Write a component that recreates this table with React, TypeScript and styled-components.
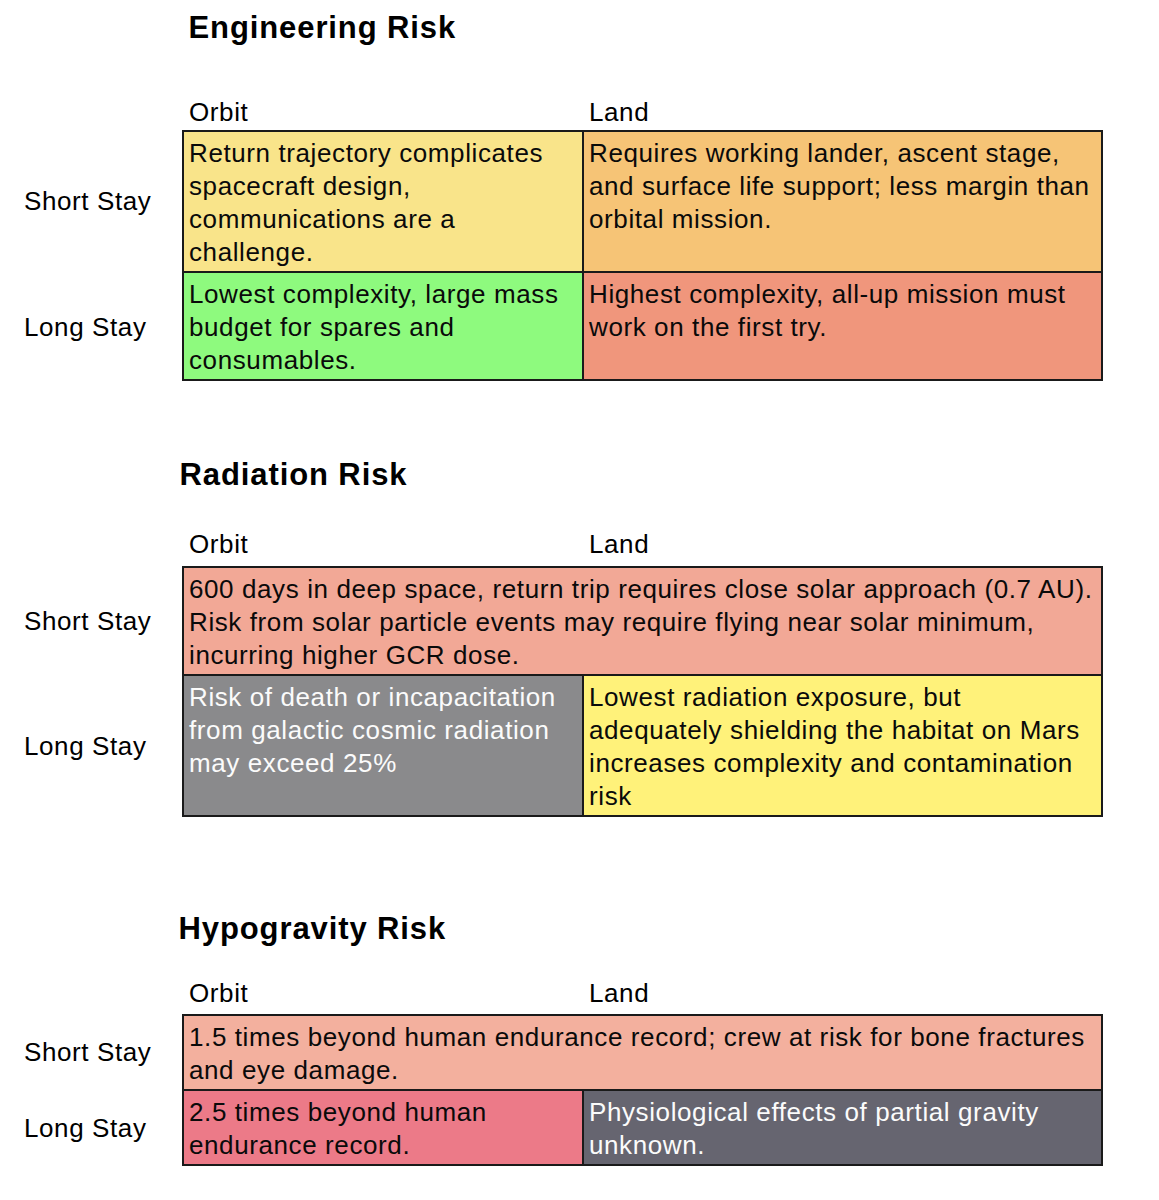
import React from "react";
import styled, { createGlobalStyle } from "styled-components";

const GlobalStyle = createGlobalStyle`
  html, body {
    margin: 0;
    padding: 0;
    background: #ffffff;
  }
  body {
    font-family: "Liberation Sans", Arial, Helvetica, sans-serif;
    color: #000;
  }
`;

const Page = styled.main`
  width: 1159px;
  padding-top: 10px;
  box-sizing: border-box;
`;

const Section = styled.section<{ $top: number }>`
  margin-top: ${(p) => p.$top}px;
  display: flex;
  flex-direction: column;
`;

const Title = styled.h2<{ $x: number; $gap: number }>`
  margin: 0 0 ${(p) => p.$gap}px ${(p) => 182 + p.$x}px;
  font-size: 31px;
  line-height: 36px;
  font-weight: 700;
  letter-spacing: 0.9px;
`;

const Grid = styled.div`
  display: grid;
  grid-template-columns: 182px 402px 519px;
`;

const HeadRow = styled(Grid)<{ $gap: number }>`
  margin-bottom: ${(p) => p.$gap}px;
`;

const BodyText = `
  font-size: 26px;
  line-height: 33px;
  letter-spacing: 0.6px;
`;

const HeadLabel = styled.div<{ $pad: number }>`
  padding-left: ${(p) => p.$pad}px;
  ${BodyText}
`;

const RowLabel = styled.div`
  align-self: center;
  padding-left: 24px;
  white-space: nowrap;
  ${BodyText}
`;

const Cell = styled.div<{
  $bg: string;
  $light?: boolean;
  $span?: boolean;
  $firstRow: boolean;
  $firstCol: boolean;
}>`
  grid-column: ${(p) => (p.$span ? "span 2" : "auto")};
  background: ${(p) => p.$bg};
  color: ${(p) => (p.$light ? "#fbfbfb" : "#0a0a0a")};
  border-style: solid;
  border-color: #1a1a1a;
  border-width: ${(p) => (p.$firstRow ? 2 : 0)}px 2px 2px
    ${(p) => (p.$firstCol ? 2 : 0)}px;
  padding: 5px 0 2px ${(p) => (p.$firstCol ? 5 : 5)}px;
  min-width: 0;
  ${BodyText}
`;

const Line = styled.span`
  display: block;
  white-space: nowrap;
`;

type CellData = { bg: string; lines: string[]; light?: boolean; span?: boolean };
type RowData = { label: string; cells: CellData[] };
type SectionData = {
  title: string;
  titleX: number;
  top: number;
  titleGap: number;
  headGap: number;
  rows: RowData[];
};

const sections: SectionData[] = [
  {
    title: "Engineering Risk",
    titleX: 6.5,
    top: 0,
    titleGap: 49.5,
    headGap: 1.5,
    rows: [
      {
        label: "Short Stay",
        cells: [
          {
            bg: "#f9e48a",
            lines: [
              "Return trajectory complicates",
              "spacecraft design,",
              "communications are a",
              "challenge.",
            ],
          },
          {
            bg: "#f6c476",
            lines: [
              "Requires working lander, ascent stage,",
              "and surface life support; less margin than",
              "orbital mission.",
            ],
          },
        ],
      },
      {
        label: "Long Stay",
        cells: [
          {
            bg: "#8efa7e",
            lines: [
              "Lowest complexity, large mass",
              "budget for spares and",
              "consumables.",
            ],
          },
          {
            bg: "#f0967c",
            lines: ["Highest complexity, all-up mission must", "work on the first try."],
          },
        ],
      },
    ],
  },
  {
    title: "Radiation Risk",
    titleX: -2.5,
    top: 76,
    titleGap: 35,
    headGap: 5,
    rows: [
      {
        label: "Short Stay",
        cells: [
          {
            bg: "#f2a896",
            span: true,
            lines: [
              "600 days in deep space, return trip requires close solar approach (0.7 AU).",
              "Risk from solar particle events may require flying near solar minimum,",
              "incurring higher GCR dose.",
            ],
          },
        ],
      },
      {
        label: "Long Stay",
        cells: [
          {
            bg: "#8a8a8c",
            light: true,
            lines: [
              "Risk of death or incapacitation",
              "from galactic cosmic radiation",
              "may exceed 25%",
            ],
          },
          {
            bg: "#fff27a",
            lines: [
              "Lowest radiation exposure, but",
              "adequately shielding the habitat on Mars",
              "increases complexity and contamination",
              "risk",
            ],
          },
        ],
      },
    ],
  },
  {
    title: "Hypogravity Risk",
    titleX: -3.5,
    top: 94,
    titleGap: 30,
    headGap: 4,
    rows: [
      {
        label: "Short Stay",
        cells: [
          {
            bg: "#f3b09e",
            span: true,
            lines: [
              "1.5 times beyond human endurance record; crew at risk for bone fractures",
              "and eye damage.",
            ],
          },
        ],
      },
      {
        label: "Long Stay",
        cells: [
          {
            bg: "#ec7a88",
            lines: ["2.5 times beyond human", "endurance record."],
          },
          {
            bg: "#666570",
            light: true,
            lines: ["Physiological effects of partial gravity", "unknown."],
          },
        ],
      },
    ],
  },
];

export default function App() {
  return (
    <>
      <GlobalStyle />
      <Page>
        {sections.map((s) => (
          <Section key={s.title} $top={s.top}>
            <Title $x={s.titleX} $gap={s.titleGap}>
              {s.title}
            </Title>
            <HeadRow $gap={s.headGap}>
              <span />
              <HeadLabel $pad={7}>Orbit</HeadLabel>
              <HeadLabel $pad={5}>Land</HeadLabel>
            </HeadRow>
            {s.rows.map((r, ri) => (
              <Grid key={r.label}>
                <RowLabel>{r.label}</RowLabel>
                {r.cells.map((c, ci) => (
                  <Cell
                    key={ci}
                    $bg={c.bg}
                    $light={c.light}
                    $span={c.span}
                    $firstRow={ri === 0}
                    $firstCol={ci === 0}
                  >
                    {c.lines.map((l) => (
                      <Line key={l}>{l}</Line>
                    ))}
                  </Cell>
                ))}
              </Grid>
            ))}
          </Section>
        ))}
      </Page>
    </>
  );
}
